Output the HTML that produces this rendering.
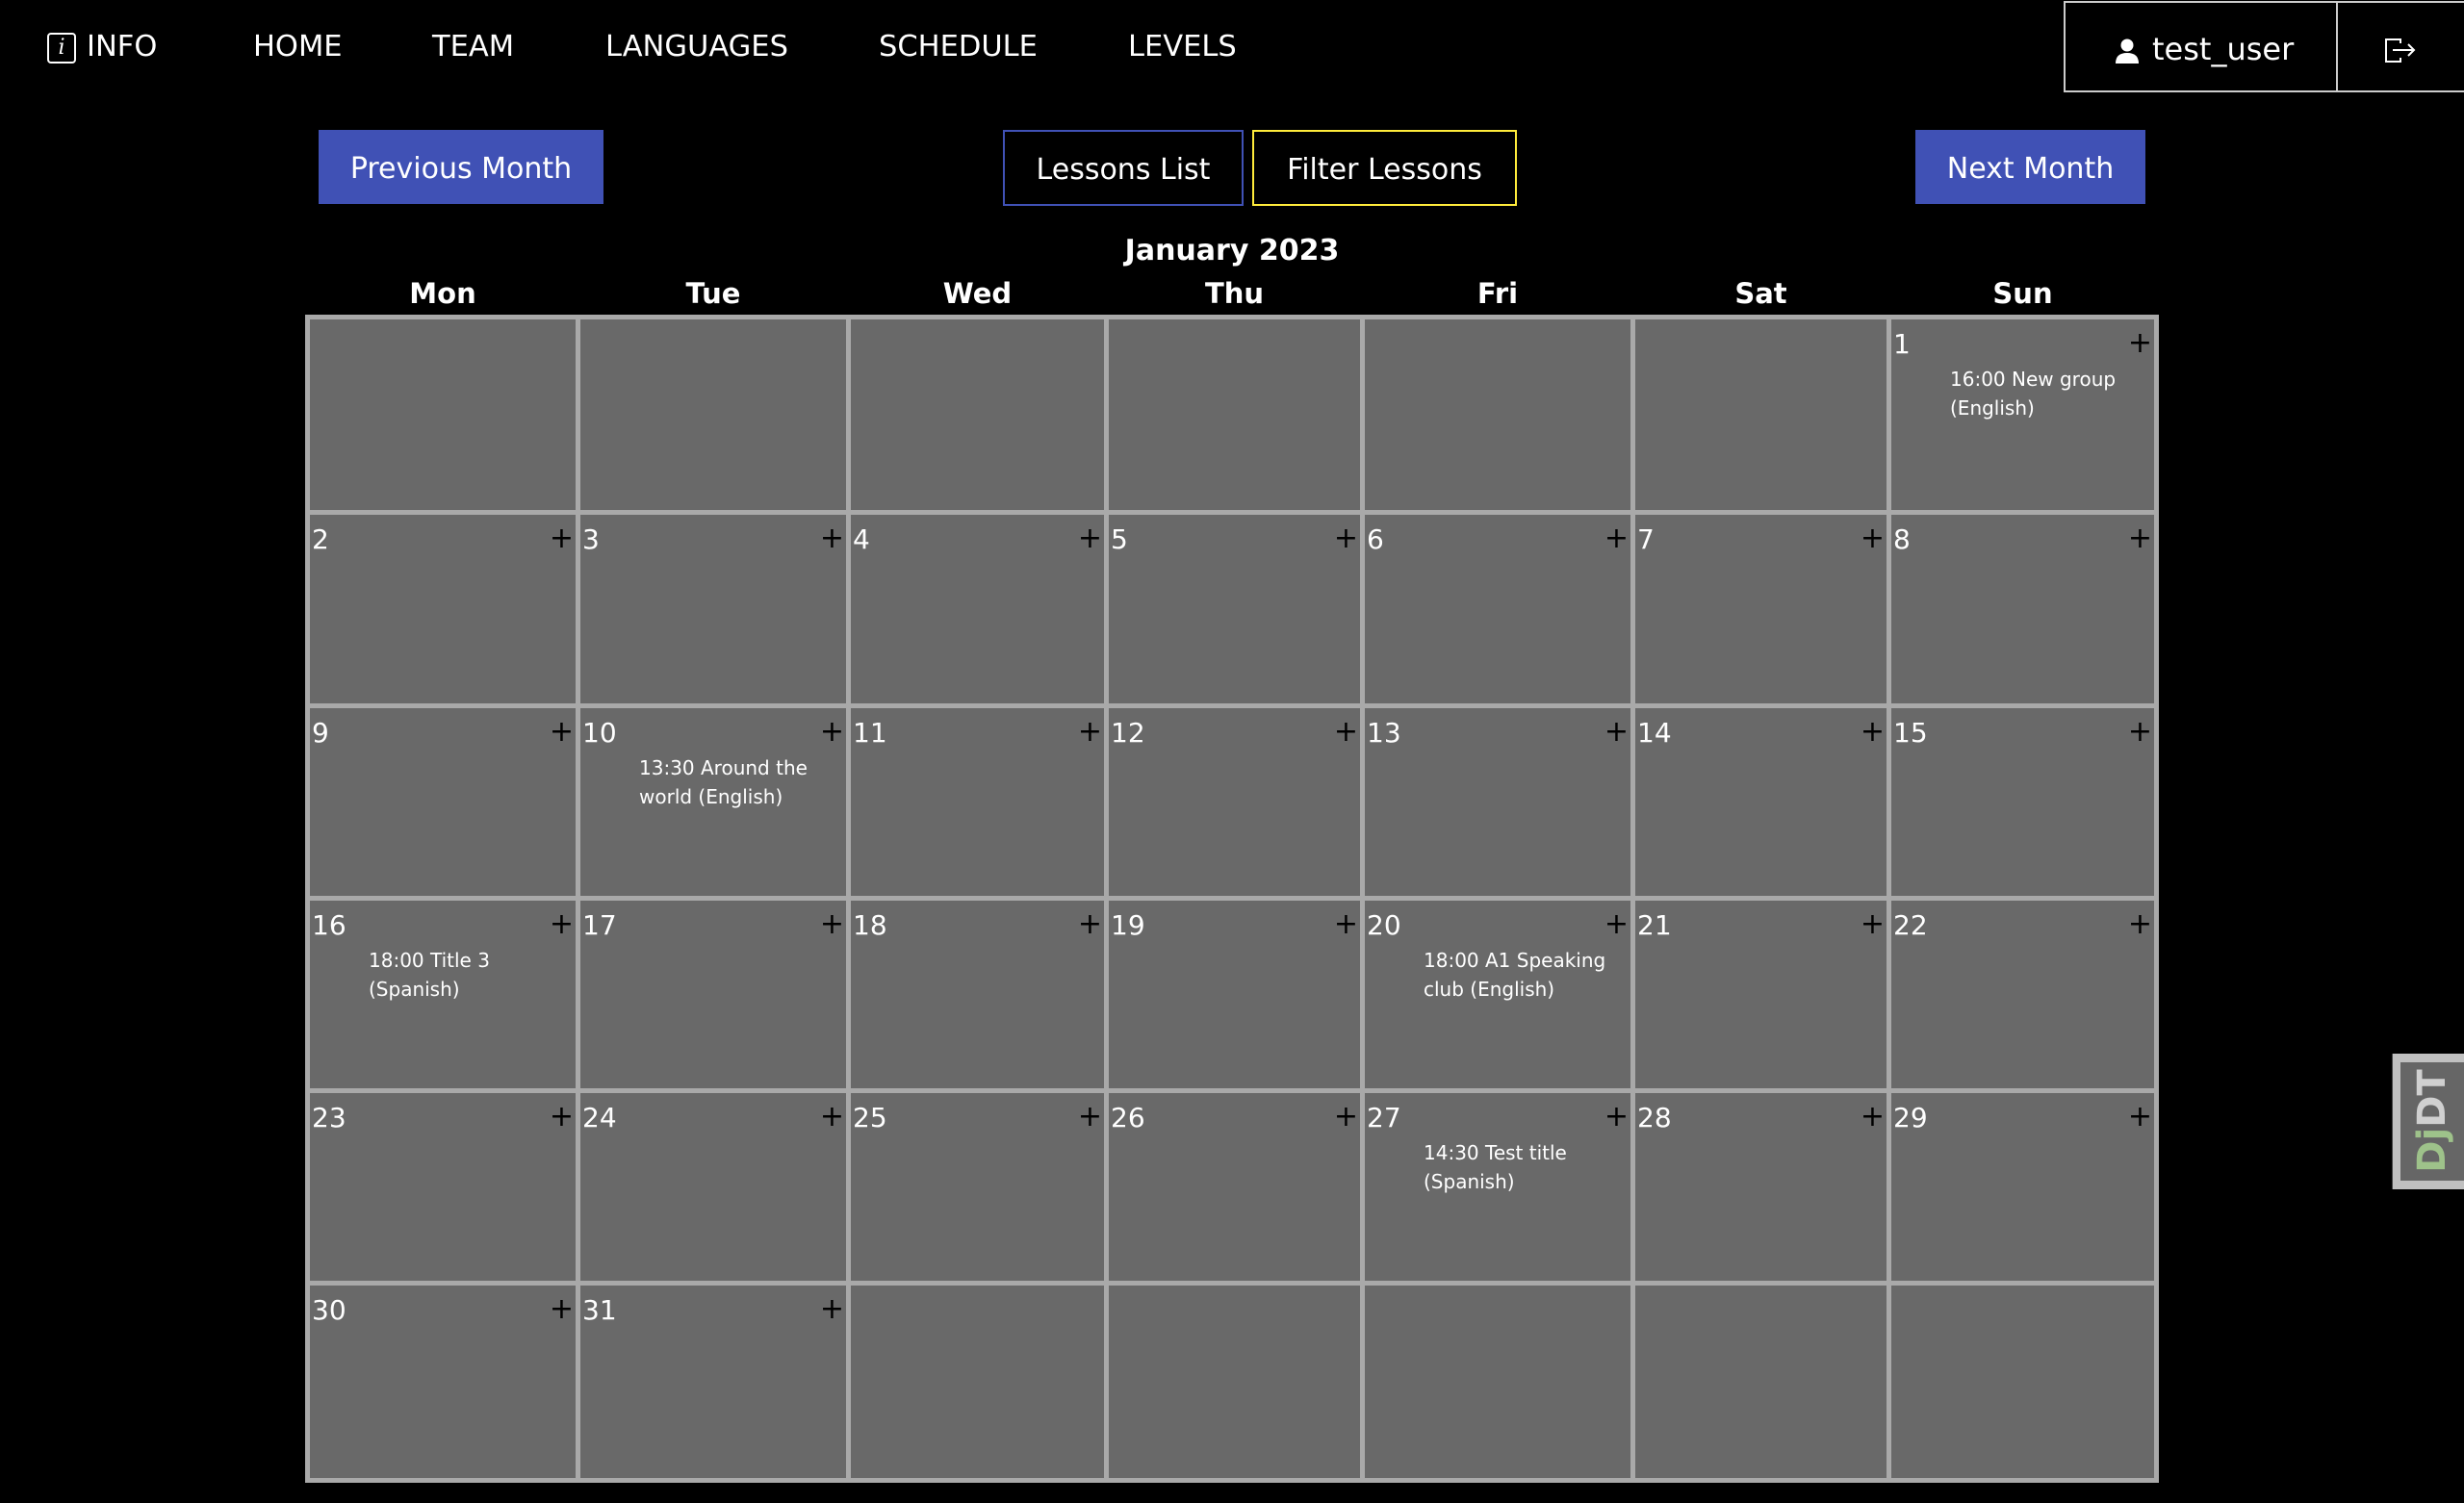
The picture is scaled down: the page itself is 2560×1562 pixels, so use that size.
<!DOCTYPE html>
<html><head><meta charset="utf-8"><style>
*{margin:0;padding:0;box-sizing:border-box}
html,body{width:2560px;height:1562px;background:#000;overflow:hidden;font-family:"DejaVu Sans","Liberation Sans",sans-serif;color:#fff}
.a{position:absolute}
.nav{top:31px;font-size:30.5px;line-height:36px;white-space:nowrap}
.btn{position:absolute;display:flex;align-items:center;justify-content:center;font-size:30px;padding-top:4px}
.hd{position:absolute;top:285px;font-size:29px;font-weight:bold;text-align:center;line-height:40px}
.c{position:absolute;background:#696969}
.n{position:absolute;left:2px;top:9px;font-size:28px;line-height:34px;color:#fff}
.p{position:absolute;right:2px;top:8px;font-size:30px;line-height:34px;color:#000}
.e{position:absolute;left:61px;top:47px;font-size:20px;line-height:30px;color:#fff;white-space:nowrap}
</style></head><body>
<div class="a" style="left:49px;top:34px;width:30px;height:32px;border:2px solid #fff;border-radius:4px;font-family:'DejaVu Serif',serif;font-style:italic;font-size:22px;line-height:28px;text-align:center">i</div>
<div class="a nav" style="left:90px">INFO</div>
<div class="a nav" style="left:263px">HOME</div>
<div class="a nav" style="left:449px">TEAM</div>
<div class="a nav" style="left:629px">LANGUAGES</div>
<div class="a nav" style="left:913px">SCHEDULE</div>
<div class="a nav" style="left:1172px">LEVELS</div>

<div class="a" style="left:2144px;top:1px;width:285px;height:95px;border:2px solid #ccc"></div>
<div class="a" style="left:2427px;top:1px;width:133px;height:95px;border:2px solid #ccc;border-right:none"></div>
<svg class="a" style="left:2196px;top:40px" width="28" height="26" viewBox="0 0 28 26"><circle cx="14" cy="7" r="6.5" fill="#fff"/><path d="M2 26 Q2 15 14 15 Q26 15 26 26 Z" fill="#fff"/></svg>
<div class="a" style="left:2236px;top:31px;font-size:32px;line-height:40px">test_user</div>
<svg class="a" style="left:2476px;top:38px" width="36" height="28" viewBox="0 0 36 28" fill="none" stroke="#fff" stroke-width="2"><path d="M18 7V3H3v23h15v-4"/><path d="M10 14h22M26 8l6 6-6 6"/></svg>

<div class="btn" style="left:331px;top:135px;width:296px;height:77px;background:#4051b5">Previous Month</div>
<div class="btn" style="left:1042px;top:135px;width:250px;height:79px;border:2px solid #4051b5">Lessons List</div>
<div class="btn" style="left:1301px;top:135px;width:275px;height:79px;border:2px solid #ffeb3b">Filter Lessons</div>
<div class="btn" style="left:1990px;top:135px;width:239px;height:77px;background:#4051b5">Next Month</div>

<div class="a" style="left:1080px;top:241px;width:400px;text-align:center;font-size:30px;font-weight:bold;line-height:40px">January 2023</div>
<div class="hd" style="left:317px;width:286px">Mon</div>
<div class="hd" style="left:598px;width:286px">Tue</div>
<div class="hd" style="left:879px;width:273px">Wed</div>
<div class="hd" style="left:1147px;width:271px">Thu</div>
<div class="hd" style="left:1413px;width:286px">Fri</div>
<div class="hd" style="left:1694px;width:271px">Sat</div>
<div class="hd" style="left:1960px;width:283px">Sun</div>

<div class="a" style="left:317px;top:327px;width:1926px;height:1214px;background:#a9a9a9"></div>

<div class="c" style="left:322px;top:332px;width:276px;height:198px"></div>
<div class="c" style="left:603px;top:332px;width:276px;height:198px"></div>
<div class="c" style="left:884px;top:332px;width:263px;height:198px"></div>
<div class="c" style="left:1152px;top:332px;width:261px;height:198px"></div>
<div class="c" style="left:1418px;top:332px;width:276px;height:198px"></div>
<div class="c" style="left:1699px;top:332px;width:261px;height:198px"></div>
<div class="c" style="left:1965px;top:332px;width:273px;height:198px"><span class="n">1</span><span class="p">+</span><div class="e">16:00 New group<br>(English)</div></div>

<div class="c" style="left:322px;top:535px;width:276px;height:196px"><span class="n">2</span><span class="p">+</span></div>
<div class="c" style="left:603px;top:535px;width:276px;height:196px"><span class="n">3</span><span class="p">+</span></div>
<div class="c" style="left:884px;top:535px;width:263px;height:196px"><span class="n">4</span><span class="p">+</span></div>
<div class="c" style="left:1152px;top:535px;width:261px;height:196px"><span class="n">5</span><span class="p">+</span></div>
<div class="c" style="left:1418px;top:535px;width:276px;height:196px"><span class="n">6</span><span class="p">+</span></div>
<div class="c" style="left:1699px;top:535px;width:261px;height:196px"><span class="n">7</span><span class="p">+</span></div>
<div class="c" style="left:1965px;top:535px;width:273px;height:196px"><span class="n">8</span><span class="p">+</span></div>

<div class="c" style="left:322px;top:736px;width:276px;height:195px"><span class="n">9</span><span class="p">+</span></div>
<div class="c" style="left:603px;top:736px;width:276px;height:195px"><span class="n">10</span><span class="p">+</span><div class="e">13:30 Around the<br>world (English)</div></div>
<div class="c" style="left:884px;top:736px;width:263px;height:195px"><span class="n">11</span><span class="p">+</span></div>
<div class="c" style="left:1152px;top:736px;width:261px;height:195px"><span class="n">12</span><span class="p">+</span></div>
<div class="c" style="left:1418px;top:736px;width:276px;height:195px"><span class="n">13</span><span class="p">+</span></div>
<div class="c" style="left:1699px;top:736px;width:261px;height:195px"><span class="n">14</span><span class="p">+</span></div>
<div class="c" style="left:1965px;top:736px;width:273px;height:195px"><span class="n">15</span><span class="p">+</span></div>

<div class="c" style="left:322px;top:936px;width:276px;height:195px"><span class="n">16</span><span class="p">+</span><div class="e">18:00 Title 3<br>(Spanish)</div></div>
<div class="c" style="left:603px;top:936px;width:276px;height:195px"><span class="n">17</span><span class="p">+</span></div>
<div class="c" style="left:884px;top:936px;width:263px;height:195px"><span class="n">18</span><span class="p">+</span></div>
<div class="c" style="left:1152px;top:936px;width:261px;height:195px"><span class="n">19</span><span class="p">+</span></div>
<div class="c" style="left:1418px;top:936px;width:276px;height:195px"><span class="n">20</span><span class="p">+</span><div class="e">18:00 A1 Speaking<br>club (English)</div></div>
<div class="c" style="left:1699px;top:936px;width:261px;height:195px"><span class="n">21</span><span class="p">+</span></div>
<div class="c" style="left:1965px;top:936px;width:273px;height:195px"><span class="n">22</span><span class="p">+</span></div>

<div class="c" style="left:322px;top:1136px;width:276px;height:195px"><span class="n">23</span><span class="p">+</span></div>
<div class="c" style="left:603px;top:1136px;width:276px;height:195px"><span class="n">24</span><span class="p">+</span></div>
<div class="c" style="left:884px;top:1136px;width:263px;height:195px"><span class="n">25</span><span class="p">+</span></div>
<div class="c" style="left:1152px;top:1136px;width:261px;height:195px"><span class="n">26</span><span class="p">+</span></div>
<div class="c" style="left:1418px;top:1136px;width:276px;height:195px"><span class="n">27</span><span class="p">+</span><div class="e">14:30 Test title<br>(Spanish)</div></div>
<div class="c" style="left:1699px;top:1136px;width:261px;height:195px"><span class="n">28</span><span class="p">+</span></div>
<div class="c" style="left:1965px;top:1136px;width:273px;height:195px"><span class="n">29</span><span class="p">+</span></div>

<div class="c" style="left:322px;top:1336px;width:276px;height:200px"><span class="n">30</span><span class="p">+</span></div>
<div class="c" style="left:603px;top:1336px;width:276px;height:200px"><span class="n">31</span><span class="p">+</span></div>
<div class="c" style="left:884px;top:1336px;width:263px;height:200px"></div>
<div class="c" style="left:1152px;top:1336px;width:261px;height:200px"></div>
<div class="c" style="left:1418px;top:1336px;width:276px;height:200px"></div>
<div class="c" style="left:1699px;top:1336px;width:261px;height:200px"></div>
<div class="c" style="left:1965px;top:1336px;width:273px;height:200px"></div>

<div class="a" style="left:2485px;top:1095px;width:75px;height:141px;background:#c0c0c0;border-left:1px solid #444"></div>
<div class="a" style="left:2494px;top:1104px;width:66px;height:123px;background:#666"></div>
<div class="a" style="left:2527px;top:1165px;width:0;height:0">
<div style="position:absolute;transform:translate(-50%,-50%) rotate(-90deg);font-size:40px;font-weight:bold;white-space:nowrap;line-height:40px"><span style="color:#9ec28a">Dj</span><span style="color:#d0d0d0">DT</span></div>
</div>
</body></html>
